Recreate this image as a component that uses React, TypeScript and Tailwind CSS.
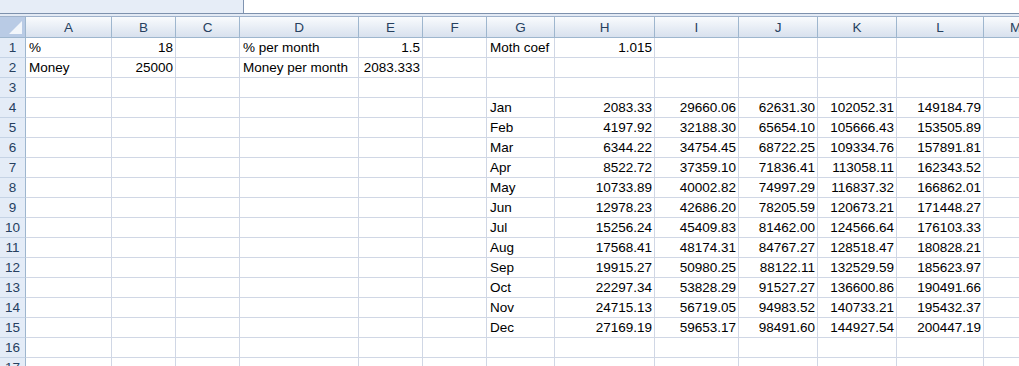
import React from 'react';

const cols = [
  { name: 'A', w: 'w-[86px]' },
  { name: 'B', w: 'w-[64px]' },
  { name: 'C', w: 'w-[64px]' },
  { name: 'D', w: 'w-[119px]' },
  { name: 'E', w: 'w-[64px]' },
  { name: 'F', w: 'w-[64px]' },
  { name: 'G', w: 'w-[68px]' },
  { name: 'H', w: 'w-[100px]' },
  { name: 'I', w: 'w-[84px]' },
  { name: 'J', w: 'w-[79px]' },
  { name: 'K', w: 'w-[79px]' },
  { name: 'L', w: 'w-[87px]' },
  { name: 'M', w: 'w-[64px]' },
];

type Cell = string | number;
type Row = Record<string, Cell>;

const months: [string, string, string, string, string, string][] = [
  ['Jan', '2083.33', '29660.06', '62631.30', '102052.31', '149184.79'],
  ['Feb', '4197.92', '32188.30', '65654.10', '105666.43', '153505.89'],
  ['Mar', '6344.22', '34754.45', '68722.25', '109334.76', '157891.81'],
  ['Apr', '8522.72', '37359.10', '71836.41', '113058.11', '162343.52'],
  ['May', '10733.89', '40002.82', '74997.29', '116837.32', '166862.01'],
  ['Jun', '12978.23', '42686.20', '78205.59', '120673.21', '171448.27'],
  ['Jul', '15256.24', '45409.83', '81462.00', '124566.64', '176103.33'],
  ['Aug', '17568.41', '48174.31', '84767.27', '128518.47', '180828.21'],
  ['Sep', '19915.27', '50980.25', '88122.11', '132529.59', '185623.97'],
  ['Oct', '22297.34', '53828.29', '91527.27', '136600.86', '190491.66'],
  ['Nov', '24715.13', '56719.05', '94983.52', '140733.21', '195432.37'],
  ['Dec', '27169.19', '59653.17', '98491.60', '144927.54', '200447.19'],
];

const rows: Row[] = [
  { A: '%', B: 18, D: '% per month', E: 1.5, G: 'Moth coef', H: 1.015 },
  { A: 'Money', B: 25000, D: 'Money per month', E: 2083.333 },
  {},
  ...months.map((m) => ({ G: m[0], H: m[1], I: m[2], J: m[3], K: m[4], L: m[5] })),
  {},
  {},
];

const isNum = (v: Cell) => typeof v === 'number' || /^[\d.]+$/.test(v);

export default function App() {
  return (
    <div className="w-[1019px] h-[366px] overflow-hidden bg-white text-[13.5px] text-black font-['Liberation_Sans',Arial,sans-serif]">
      {/* name box strip */}
      <div className="flex h-[13px]">
        <div className="w-[244px] bg-[#e6edf7] border-r border-[#7f93b0]" />
        <div className="flex-1 bg-white" />
      </div>
      <div className="h-px bg-[#7d91ad]" />
      <div className="h-[2px] bg-[#e3eaf4]" />
      <div className="h-px bg-[#9fb2cb]" />

      {/* column headers */}
      <div className="flex h-[21px] border-b border-[#9eb6ce] bg-gradient-to-b from-[#f9fbfd] to-[#d8e1ee] text-[#26405f]">
        <div className="w-[26px] shrink-0 border-r border-[#9eb6ce] bg-[#b9cbe5] relative">
          <div className="absolute right-[3px] bottom-[3px] w-0 h-0 border-l-[13px] border-l-transparent border-b-[13px] border-b-[#f2f6fb]" />
        </div>
        {cols.map((c) => (
          <div
            key={c.name}
            className={`${c.w} shrink-0 border-r border-[#9eb6ce] flex items-center justify-center leading-none pt-px`}
          >
            {c.name}
          </div>
        ))}
      </div>

      {/* body rows */}
      {rows.map((r, i) => (
        <div key={i} className="flex h-[20px]">
          <div className="w-[26px] shrink-0 bg-[#e4ecf7] border-r border-b border-r-[#9eb6ce] border-b-[#c5d3e5] text-[#26405f] flex items-center justify-center leading-none">
            {i + 1}
          </div>
          {cols.map((c) => {
            const v = r[c.name];
            const num = v !== undefined && isNum(v);
            return (
              <div
                key={c.name}
                className={`${c.w} shrink-0 border-r border-b border-[#d0d7e5] flex items-center leading-none whitespace-nowrap overflow-visible ${
                  num ? 'justify-end pr-[2px]' : 'pl-[3px]'
                }`}
              >
                {v}
              </div>
            );
          })}
        </div>
      ))}
    </div>
  );
}
